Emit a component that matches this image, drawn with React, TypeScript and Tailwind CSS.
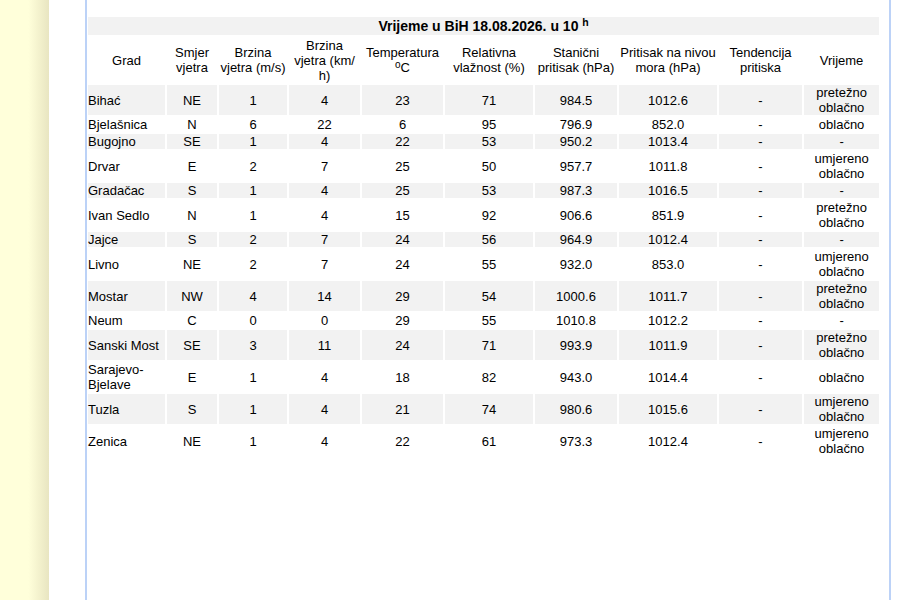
import React from 'react';

type Row = [string, string, string, string, string, string, string, string, string, string];

const rows: Row[] = [
  ['Bihać', 'NE', '1', '4', '23', '71', '984.5', '1012.6', '-', 'pretežno oblačno'],
  ['Bjelašnica', 'N', '6', '22', '6', '95', '796.9', '852.0', '-', 'oblačno'],
  ['Bugojno', 'SE', '1', '4', '22', '53', '950.2', '1013.4', '-', '-'],
  ['Drvar', 'E', '2', '7', '25', '50', '957.7', '1011.8', '-', 'umjereno oblačno'],
  ['Gradačac', 'S', '1', '4', '25', '53', '987.3', '1016.5', '-', '-'],
  ['Ivan Sedlo', 'N', '1', '4', '15', '92', '906.6', '851.9', '-', 'pretežno oblačno'],
  ['Jajce', 'S', '2', '7', '24', '56', '964.9', '1012.4', '-', '-'],
  ['Livno', 'NE', '2', '7', '24', '55', '932.0', '853.0', '-', 'umjereno oblačno'],
  ['Mostar', 'NW', '4', '14', '29', '54', '1000.6', '1011.7', '-', 'pretežno oblačno'],
  ['Neum', 'C', '0', '0', '29', '55', '1010.8', '1012.2', '-', '-'],
  ['Sanski Most', 'SE', '3', '11', '24', '71', '993.9', '1011.9', '-', 'pretežno oblačno'],
  ['Sarajevo-Bjelave', 'E', '1', '4', '18', '82', '943.0', '1014.4', '-', 'oblačno'],
  ['Tuzla', 'S', '1', '4', '21', '74', '980.6', '1015.6', '-', 'umjereno oblačno'],
  ['Zenica', 'NE', '1', '4', '22', '61', '973.3', '1012.4', '-', 'umjereno oblačno'],
];

function WeatherTable() {
  return (
    <table className="ml-[-1px] w-[795px] table-fixed border-separate border-spacing-[2px]">
      <colgroup>
        <col className="w-[77px]" />
        <col className="w-[50px]" />
        <col className="w-[68px]" />
        <col className="w-[71px]" />
        <col className="w-[81px]" />
        <col className="w-[88px]" />
        <col className="w-[82px]" />
        <col className="w-[98px]" />
        <col className="w-[83px]" />
        <col className="w-[75px]" />
      </colgroup>
      <thead>
        <tr>
          <th colSpan={10} className="bg-[#f2f2f2] py-px text-[14px] font-bold leading-[16px]">
            Vrijeme u BiH 18.08.2026. u 10 <sup>h</sup>
          </th>
        </tr>
        <tr>
          <th className="py-[0.5px] font-normal">Grad</th>
          <th className="py-[0.5px] font-normal">Smjer vjetra</th>
          <th className="py-[0.5px] font-normal">Brzina vjetra (m/s)</th>
          <th className="py-[0.5px] font-normal">
            Brzina vjetra (km/<wbr />h)
          </th>
          <th className="py-[0.5px] font-normal">
            Temperatura
            <br />
            <span className="align-top text-[10px] leading-[10px]">o</span>C
          </th>
          <th className="py-[0.5px] font-normal">Relativna vlažnost (%)</th>
          <th className="py-[0.5px] font-normal">Stanični pritisak (hPa)</th>
          <th className="py-[0.5px] font-normal">Pritisak na nivou mora (hPa)</th>
          <th className="py-[0.5px] font-normal">Tendencija pritiska</th>
          <th className="py-[0.5px] font-normal">Vrijeme</th>
        </tr>
      </thead>
      <tbody>
        {rows.map((row, i) => (
          <tr key={row[0]}>
            {row.map((cell, j) => (
              <td
                key={j}
                className={
                  (i % 2 === 0 ? 'bg-[#f2f2f2] ' : '') +
                  (j === 0 ? 'p-0 text-left' : 'p-0 text-center')
                }
              >
                {cell}
              </td>
            ))}
          </tr>
        ))}
      </tbody>
    </table>
  );
}

export default function App() {
  return (
    <div className="flex h-[600px] overflow-hidden bg-white font-['Liberation_Sans',Arial,sans-serif] text-[13px] leading-[15px] text-black">
      <div className="w-[49px] shrink-0 bg-[linear-gradient(to_right,#ffffda_58%,#e8e5c1)]" />
      <div className="w-[36px] shrink-0" />
      <div className="w-[806px] shrink-0 border-x-2 border-[#bcd2f7] pt-[15px]">
        <WeatherTable />
      </div>
    </div>
  );
}
